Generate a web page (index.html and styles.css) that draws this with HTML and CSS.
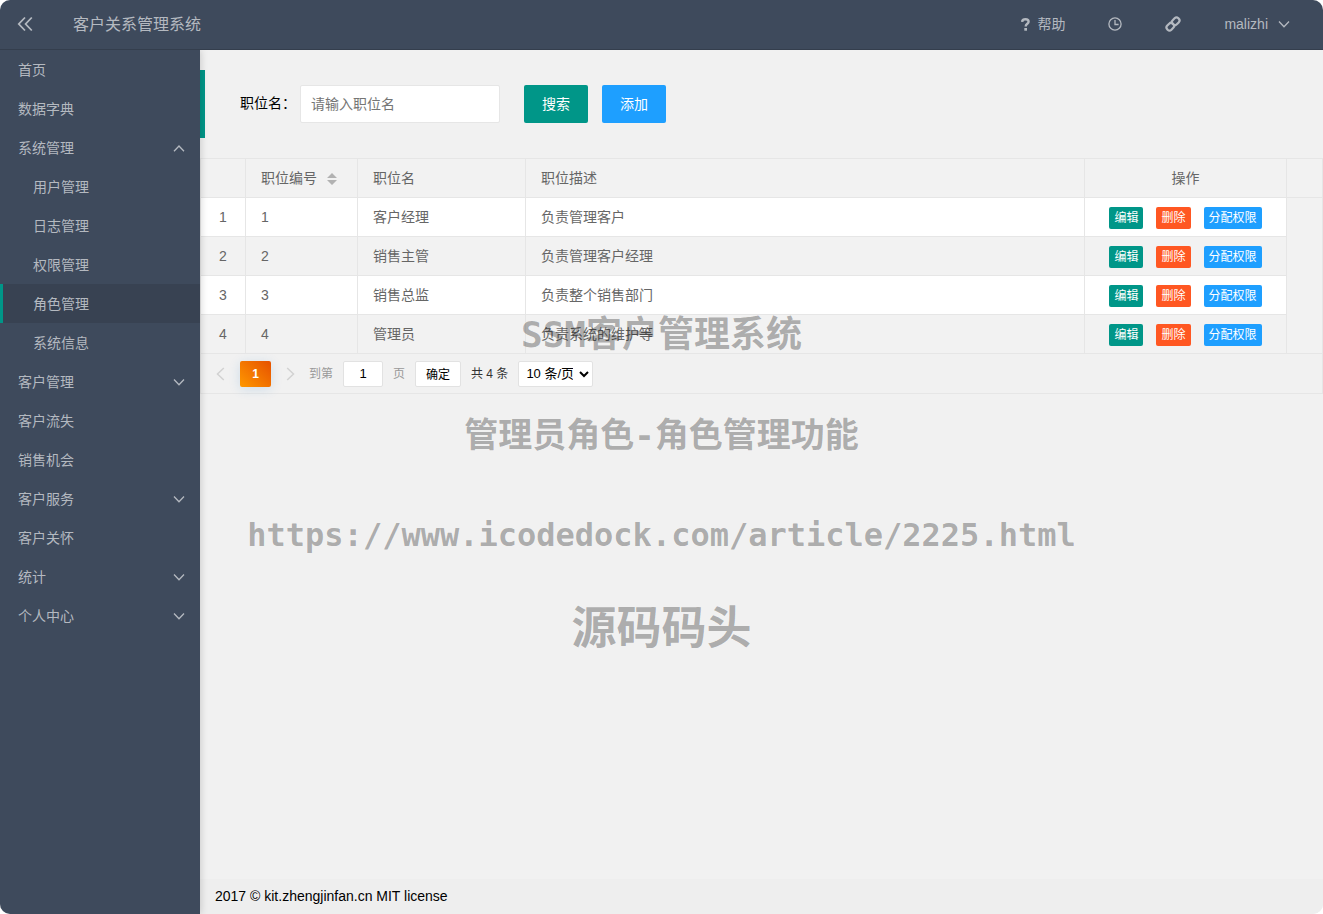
FILE: index.html
```html
<!DOCTYPE html>
<html lang="zh-CN">
<head>
<meta charset="utf-8">
<title>客户关系管理系统</title>
<link rel="stylesheet" href="styles.css">
</head>
<body>
<svg class="sprite" aria-hidden="true">
  <symbol id="down" viewBox="0 0 12 12"><path d="M1 3.5 6 8.8 11 3.5"/></symbol>
  <symbol id="up" viewBox="0 0 12 12"><path d="M1 9.3 6 4 11 9.3"/></symbol>
</svg>
<div class="app">
  <header class="header">
    <button class="fold" type="button" aria-label="折叠菜单">
      <svg width="16" height="16" viewBox="0 0 16 16"><path d="M8 1.5 1.8 8 8 14.5M14.8 1.5 8.6 8l6.2 6.5"/></svg>
    </button>
    <h1 class="brand">客户关系管理系统</h1>
    <nav class="tools">
      <a href="#" class="help">
        <svg width="9" height="13" viewBox="0 0 9 13"><path d="M1.1 3.8C1.3 2.1 2.7 1.3 4.4 1.3c1.9 0 3.2 1 3.2 2.5 0 2-2.9 2-2.9 4.6" fill="none" stroke="currentColor" stroke-width="2.4"/><rect x="3.3" y="10" width="2.7" height="2.7" fill="currentColor"/></svg>
        帮助</a>
      <a href="#" aria-label="时间">
        <svg width="14" height="14" viewBox="0 0 14 14" fill="none" stroke="currentColor" stroke-width="1.3"><circle cx="7" cy="7" r="6.1"/><path d="M7 3v4.5h3.6"/></svg>
      </a>
      <a href="#" aria-label="链接">
        <svg width="16" height="16" viewBox="0 0 16 16" fill="none" stroke="currentColor" stroke-width="2.2"><rect x="-4" y="-2.9" width="8" height="5.8" rx="2.7" transform="translate(10.7 5.3) rotate(-45)"/><rect x="-4" y="-2.9" width="8" height="5.8" rx="2.7" transform="translate(5.3 10.7) rotate(-45)"/></svg>
      </a>
      <a href="#" class="user">malizhi <svg class="chev" width="12" height="12"><use href="#down"/></svg></a>
    </nav>
  </header>
  <div class="body">
    <nav class="side">
      <a href="#">首页</a>
      <a href="#">数据字典</a>
      <a href="#">系统管理<svg class="chev" width="12" height="12"><use href="#up"/></svg></a>
      <a href="#" class="sub">用户管理</a>
      <a href="#" class="sub">日志管理</a>
      <a href="#" class="sub">权限管理</a>
      <a href="#" class="sub active">角色管理</a>
      <a href="#" class="sub">系统信息</a>
      <a href="#">客户管理<svg class="chev" width="12" height="12"><use href="#down"/></svg></a>
      <a href="#">客户流失</a>
      <a href="#">销售机会</a>
      <a href="#">客户服务<svg class="chev" width="12" height="12"><use href="#down"/></svg></a>
      <a href="#">客户关怀</a>
      <a href="#">统计<svg class="chev" width="12" height="12"><use href="#down"/></svg></a>
      <a href="#">个人中心<svg class="chev" width="12" height="12"><use href="#down"/></svg></a>
    </nav>
    <div class="content">
      <main class="main">
        <form class="search">
          <label for="post">职位名：</label>
          <input id="post" type="text" placeholder="请输入职位名">
          <button type="button" class="btn green">搜索</button>
          <button type="button" class="btn blue">添加</button>
        </form>
        <section class="view">
          <table class="grid">
            <colgroup><col class="c-no"><col class="c-id"><col class="c-name"><col><col class="c-ops"><col class="c-fill"></colgroup>
            <thead>
              <tr><th></th><th>职位编号<svg class="sort" width="10" height="12" viewBox="0 0 10 12"><path d="M5 0l5 5H0zM5 12l5-5H0z" fill="currentColor"/></svg></th><th>职位名</th><th>职位描述</th><th class="ops">操作</th><th></th></tr>
            </thead>
            <tbody>
              <tr><td class="no">1</td><td>1</td><td>客户经理</td><td>负责管理客户</td><td class="ops"><div class="acts"><button type="button" class="mini green">编辑</button><button type="button" class="mini red">删除</button><button type="button" class="mini blue">分配权限</button></div></td><td class="fill" rowspan="4"></td></tr>
              <tr><td class="no">2</td><td>2</td><td>销售主管</td><td>负责管理客户经理</td><td class="ops"><div class="acts"><button type="button" class="mini green">编辑</button><button type="button" class="mini red">删除</button><button type="button" class="mini blue">分配权限</button></div></td></tr>
              <tr><td class="no">3</td><td>3</td><td>销售总监</td><td>负责整个销售部门</td><td class="ops"><div class="acts"><button type="button" class="mini green">编辑</button><button type="button" class="mini red">删除</button><button type="button" class="mini blue">分配权限</button></div></td></tr>
              <tr><td class="no">4</td><td>4</td><td>管理员</td><td>负责系统的维护等</td><td class="ops"><div class="acts"><button type="button" class="mini green">编辑</button><button type="button" class="mini red">删除</button><button type="button" class="mini blue">分配权限</button></div></td></tr>
            </tbody>
          </table>
          <div class="pager">
            <button type="button" class="step" aria-label="上一页" disabled><svg width="9" height="14" viewBox="0 0 9 14"><path d="M7.8 1 1.5 7l6.3 6"/></svg></button>
            <button type="button" class="cur">1</button>
            <button type="button" class="step next" aria-label="下一页" disabled><svg width="9" height="14" viewBox="0 0 9 14"><path d="M1.2 1 7.5 7l-6.3 6"/></svg></button>
            <label for="page" class="dim">到第</label>
            <input id="page" type="text" value="1">
            <span class="dim">页</span>
            <button type="button" class="go">确定</button>
            <span>共 4 条</span>
            <select aria-label="每页条数"><option>10 条/页</option></select>
          </div>
        </section>
      </main>
      <footer class="footer">2017 © kit.zhengjinfan.cn MIT license</footer>
    </div>
  </div>
  <div class="mark">
    <p class="m1">SSM客户管理系统</p>
    <p class="m2">管理员角色-角色管理功能</p>
    <p class="m3">https://www.icodedock.com/article/2225.html</p>
    <p class="m4">源码码头</p>
  </div>
</div>
</body>
</html>
```
FILE: styles.css
```css
* { box-sizing: border-box; }

body {
  margin: 0;
  background: #fff;
  font: 14px/24px "Liberation Sans", "Noto Sans CJK SC", sans-serif;
  color: #000;
}

a { color: inherit; text-decoration: none; }
button, input, select { font-family: inherit; margin: 0; }
button { border: 0; padding: 0; }
.sprite { display: none; }

.app {
  display: flex;
  flex-direction: column;
  min-height: 100vh;
  border-radius: 10px;
  overflow: hidden;
  position: relative;
  background: #f1f1f1;
}

.header {
  display: flex;
  align-items: center;
  height: 50px;
  padding: 0 33px 1px 17px;
  background: #3e4a5c;
  border-bottom: 1px solid #343e4d;
  color: #b4b9c0;
}
.fold { display: flex; background: none; color: inherit; }
.fold path, .chev, .step path { fill: none; stroke: currentColor; }
.fold path { stroke-width: 1.8; }
.chev { stroke-width: 1.3; }
.brand { margin: 0 auto 0 40px; font-size: 16px; line-height: 26px; padding-top: 1px; font-weight: 400; }
.tools { display: flex; align-items: center; gap: 43px; }
.tools a { display: flex; align-items: center; }
.help { gap: 7px; }
.user { gap: 10px; }

.body { flex: 1; display: flex; }

.side {
  width: 200px;
  flex: none;
  background: #3e4a5c;
  color: #b4b9c0;
  box-shadow: 0 0 8px rgba(0, 0, 0, .2);
  clip-path: inset(0 -10px 0 0);
  position: relative;
  z-index: 1;
}
.side a {
  display: flex;
  align-items: center;
  justify-content: space-between;
  height: 39px;
  padding: 0 15px 0 18px;
}
.side .sub { padding-left: 33px; }
.side .active { background: #384252; border-left: 3px solid #009688; padding-left: 30px; }

.content { flex: 1; display: flex; flex-direction: column; min-width: 0; }
.main { flex: 1; padding-top: 20px; }

.search {
  display: flex;
  align-items: center;
  padding: 15px 15px 15px 35px;
  border-left: 5px solid #009688;
  margin-bottom: 20px;
}
.search label { width: 60px; padding-bottom: 2px; }
.search input {
  width: 200px;
  height: 38px;
  padding: 0 10px;
  margin-right: 24px;
  border: 1px solid #e6e6e6;
  border-radius: 2px;
  font-size: 14px;
}
.btn {
  width: 64px;
  height: 38px;
  padding-bottom: 2px;
  margin-right: 14px;
  border-radius: 2px;
  color: #fff;
  font-size: 14px;
}
.green { background: #009688; }
.blue { background: #1e9fff; }
.red { background: #ff5722; }

.view { border: 1px solid #e6e6e6; color: #666; }
.grid { width: 100%; table-layout: fixed; border-collapse: separate; border-spacing: 0; }
.c-no { width: 45px; }
.c-id { width: 112px; }
.c-name { width: 168px; }
.c-ops { width: 202px; }
.c-fill { width: 35px; }
.grid th, .grid td {
  height: 39px;
  padding: 0 15px;
  border-right: 1px solid #e6e6e6;
  border-bottom: 1px solid #e6e6e6;
  text-align: left;
  font-weight: 400;
}
.grid th { background: #f2f2f2; }
.grid th:last-child, .grid .fill { border-right: 0; }
.grid td { background: #fff; }
.grid tr:nth-child(even) td, .grid .fill { background: #f2f2f2; }
.grid .no { padding: 0; text-align: center; }
.grid .ops { padding: 0; text-align: center; }
.sort { margin-left: 10px; color: #b2b2b2; vertical-align: -2px; }
.acts { display: flex; justify-content: center; gap: 13px; padding-top: 1px; }
.mini {
  height: 22px;
  padding: 0 5px 2px;
  border-radius: 2px;
  color: #fff;
  font-size: 12px;
}

.pager {
  display: flex;
  align-items: center;
  gap: 10px;
  height: 39px;
  padding-left: 15px;
  font-size: 12px;
  color: #333;
}
.pager input, .go, .pager select {
  height: 26px;
  border: 1px solid #e2e2e2;
  border-radius: 2px;
  background: #fff;
  color: #000;
  font-size: 12px;
}
.pager input { width: 40px; padding: 0; text-align: center; font-size: 13px; }
.go { width: 46px; }
.pager select { width: 75px; padding: 0 3px; font-size: 13px; }
.dim { color: #999; }
.step { display: flex; width: 14px; color: #d2d2d2; background: none; }
.step path { stroke-width: 1.5; }
.next { justify-content: flex-end; margin-right: 4px; }
.cur {
  width: 31px;
  height: 26px;
  border-radius: 2px;
  background: linear-gradient(45deg, #ff9800, #e65100);
  box-shadow: 0 2px 12px rgba(30, 120, 200, .16);
  color: #fff;
  font-size: 12px;
  font-weight: 700;
}

.footer { height: 35px; padding: 5px 15px; background: #eee; }

.mark {
  position: absolute;
  inset: 0;
  z-index: 2;
  display: flex;
  flex-direction: column;
  align-items: center;
  padding-top: 309px;
  color: rgba(0, 0, 0, .3);
  font-family: "DejaVu Sans Mono", "Noto Sans CJK SC", monospace;
  font-weight: 700;
  pointer-events: none;
}
.mark p { margin: 0; white-space: nowrap; }
.m1 { font-size: 36px; line-height: 52px; }
.m2 { font-size: 34px; line-height: 52px; padding-top: 48px; }
.m3 { font-size: 32px; line-height: 52px; padding-top: 48px; }
.m4 { font-size: 45px; line-height: 60px; padding-top: 38px; }
```
